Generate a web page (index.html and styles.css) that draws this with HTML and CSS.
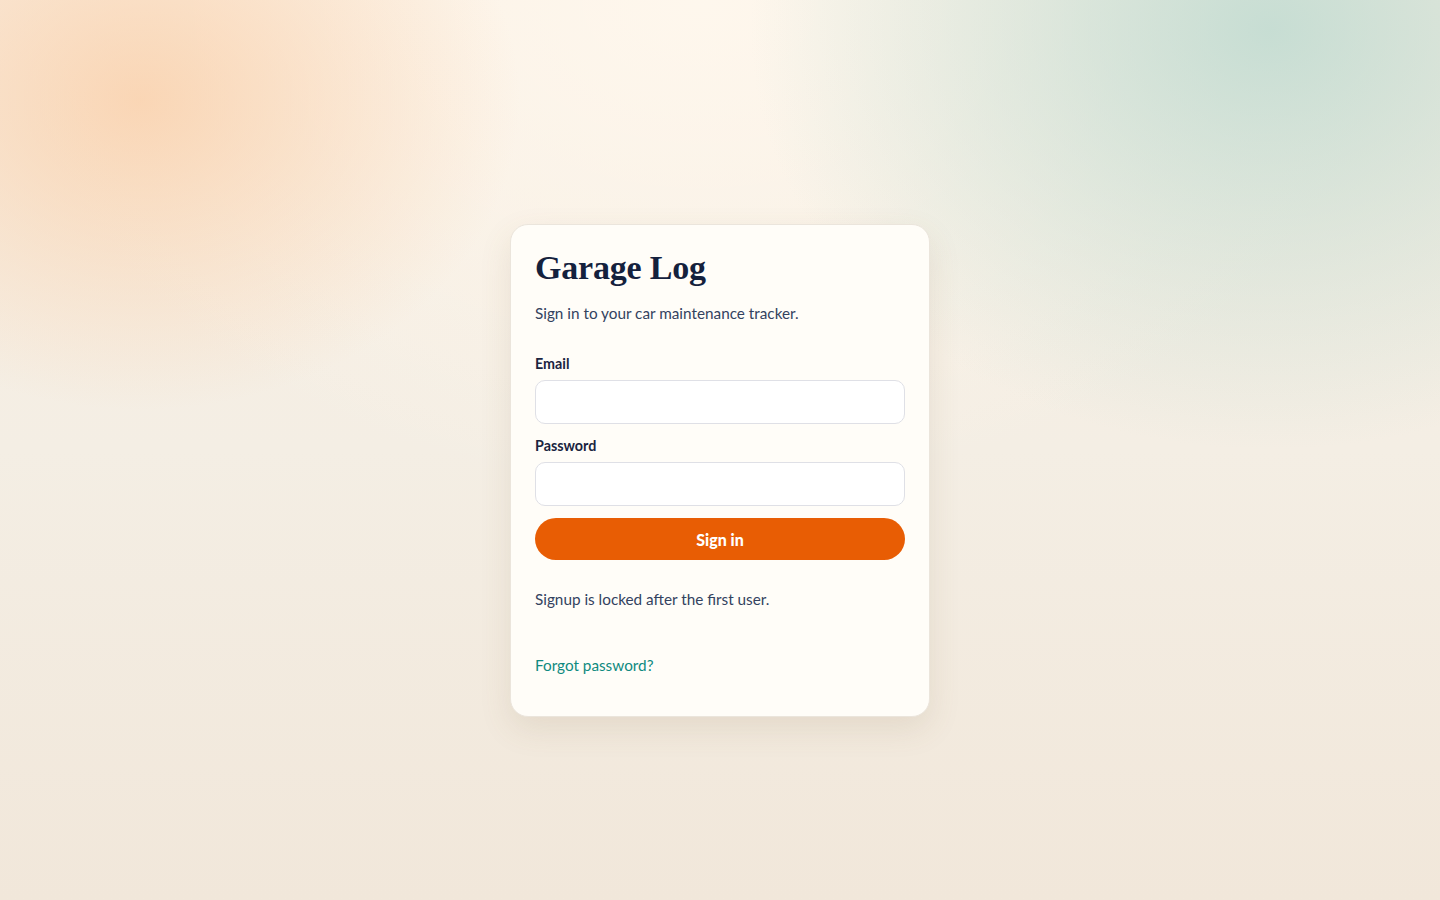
FILE: index.html
```html
<!DOCTYPE html>
<html lang="en">
<head>
<meta charset="utf-8">
<title>Garage Log — Sign in</title>
<link rel="stylesheet" href="styles.css">
</head>
<body>
<main class="page">
  <section class="card">
    <h1 class="title">Garage Log</h1>
    <p class="subtitle">Sign in to your car maintenance tracker.</p>
    <form class="form">
      <div class="field">
        <label class="label" for="email">Email</label>
        <input class="input" id="email" type="email">
      </div>
      <div class="field">
        <label class="label" for="password">Password</label>
        <input class="input" id="password" type="password">
      </div>
      <button class="button" type="button">Sign in</button>
    </form>
    <p class="note">Signup is locked after the first user.</p>
    <a class="link" href="#">Forgot password?</a>
  </section>
</main>
</body>
</html>
```
FILE: styles.css
```css
* { box-sizing: border-box; }
html, body { margin: 0; height: 100%; }
body {
  font-family: Lato, "Liberation Sans", sans-serif;
  color: #33425f;
  background:
    radial-gradient(ellipse 380px 310px at 140px 100px, rgba(250, 205, 165, 0.75), rgba(250, 205, 165, 0) 100%),
    radial-gradient(ellipse 520px 420px at 1270px 30px, rgba(190, 218, 208, 0.85), rgba(190, 218, 208, 0) 100%),
    radial-gradient(ellipse 700px 500px at 700px 0px, rgba(255, 248, 238, 0.9), rgba(255, 248, 238, 0) 100%),
    linear-gradient(180deg, #f9efe3 0%, #f4eee4 50%, #f1e7da 100%);
}
.page {
  min-height: 100%;
  display: flex;
  justify-content: center;
  align-items: flex-start;
  padding-top: 224px;
}
.card {
  width: 420px;
  background: #fffdf8;
  border: 1px solid #ebe5dc;
  border-radius: 18px;
  padding: 23px 24px 39px;
  box-shadow: 0 12px 32px rgba(120, 95, 60, 0.12);
  display: flex;
  flex-direction: column;
}
.title {
  margin: 0;
  font-family: "Liberation Serif", "DejaVu Serif", serif;
  font-weight: 700;
  font-size: 34px;
  line-height: 40px;
  letter-spacing: -0.2px;
  color: #14213d;
}
.subtitle {
  margin: 13px 0 0;
  font-size: 15.3px;
  line-height: 24px;
  color: #33425f;
}
.form {
  margin-top: 29px;
  display: flex;
  flex-direction: column;
  gap: 12px;
}
.field {
  display: flex;
  flex-direction: column;
  gap: 6px;
}
.label {
  font-size: 14.3px;
  line-height: 20px;
  font-weight: 700;
  color: #1a2440;
}
.input {
  height: 44px;
  border: 1px solid #dfe0e6;
  border-radius: 10px;
  background: #ffffff;
  font: inherit;
  padding: 0 12px;
}
.button {
  height: 42px;
  border: 0;
  border-radius: 21px;
  background: #e85d04;
  color: #ffffff;
  font-family: inherit;
  font-weight: 900;
  font-size: 16px;
}
.note {
  margin: 27px 0 0;
  font-size: 15.3px;
  line-height: 24px;
  color: #33425f;
}
.link {
  margin-top: 42px;
  font-size: 15.3px;
  line-height: 24px;
  color: #0f8a80;
  text-decoration: none;
  align-self: flex-start;
}
```
